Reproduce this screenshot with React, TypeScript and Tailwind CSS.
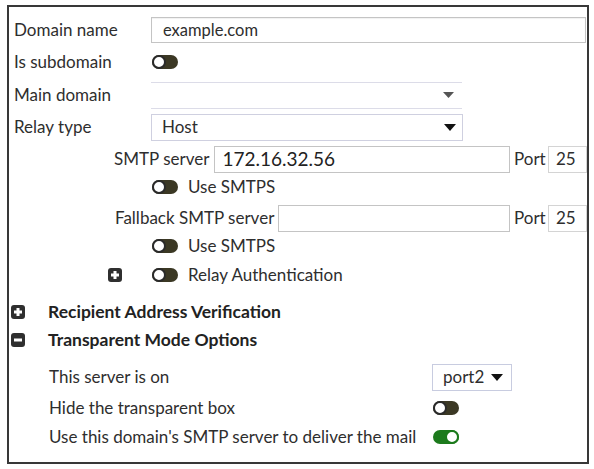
import React from "react";

const Toggle = ({ on = false }: { on?: boolean }) =>
  on ? (
    <div className="relative h-[14px] w-[26px] rounded-full bg-[#1c7a1c]">
      <div className="absolute right-0 top-0 h-[14px] w-[14px] rounded-full border-[2px] border-[#1c7a1c] bg-white" />
    </div>
  ) : (
    <div className="relative h-[14px] w-[26px] rounded-full bg-[#3b3824]">
      <div className="absolute left-0 top-0 h-[14px] w-[14px] rounded-full border-[2px] border-[#2a2a2a] bg-white" />
    </div>
  );

const Box = ({ minus = false }: { minus?: boolean }) => (
  <svg width="14" height="14" viewBox="0 0 14 14">
    <rect x="0" y="0" width="14" height="14" rx="3" fill="#2f2f2f" />
    <rect x="3" y="5.5" width="8" height="3" fill="#fff" />
    {!minus && <rect x="5.5" y="3" width="3" height="8" fill="#fff" />}
  </svg>
);

const Caret = () => (
  <svg width="12" height="7" viewBox="0 0 12 7">
    <path d="M0 0 L12 0 L6 7 Z" fill="#111" />
  </svg>
);

export default function App() {
  return (
    <div className="h-[469px] w-[594px] bg-white pl-[7px] pt-[5px] text-[17px] text-[#2e2e2e] [font-family:Lato,'Noto_Sans',sans-serif]">
      <div className="flex h-[459px] w-[582px] flex-col border-2 border-[#383838] pl-[5px] pt-[9px]">
        {/* Domain name */}
        <div className="flex h-[28px] items-center">
          <div className="w-[137px] shrink-0">Domain name</div>
          <div className="flex h-[26px] w-[435px] items-center border border-[#c4c4c4] pl-[11px] text-[16.5px] shadow-[inset_0_1px_1px_rgba(0,0,0,0.06)]">
            example.com
          </div>
        </div>
        {/* Is subdomain */}
        <div className="mt-[4px] flex h-[28px] items-center">
          <div className="w-[138px] shrink-0">Is subdomain</div>
          <Toggle />
        </div>
        {/* Main domain */}
        <div className="mt-[5px] flex h-[28px] items-center">
          <div className="w-[137px] shrink-0">Main domain</div>
          <div className="flex h-[27px] w-[311px] items-center justify-end border-y border-[#dcdce8] pr-[8px]">
            <svg width="11" height="6" viewBox="0 0 11 6">
              <path d="M0 0 L11 0 L5.5 6 Z" fill="#555" />
            </svg>
          </div>
        </div>
        {/* Relay type */}
        <div className="mt-[4px] flex h-[28px] items-center">
          <div className="w-[137px] shrink-0">Relay type</div>
          <div className="flex h-[27px] w-[312px] items-center justify-between border border-[#cfd0e0] pl-[10px] pr-[6px]">
            <span>Host</span>
            <Caret />
          </div>
        </div>
        {/* SMTP server */}
        <div className="mt-[4px] flex h-[28px] w-[573px] items-center">
          <div className="w-[100px] shrink-0" />
          <div className="shrink-0 whitespace-nowrap">SMTP server</div>
          <div className="ml-[5px] flex h-[27px] flex-1 items-center border border-[#c4c4c4] pl-[7px] text-[19px] text-[#222]">
            172.16.32.56
          </div>
          <div className="ml-[4px] w-[34px] shrink-0">Port</div>
          <div className="flex h-[27px] w-[39px] shrink-0 items-center border border-[#d4d4d4] pl-[7px]">25</div>
        </div>
        {/* Use SMTPS */}
        <div className="flex h-[28px] items-center">
          <div className="w-[138px] shrink-0" />
          <Toggle />
          <div className="ml-[10px]">Use SMTPS</div>
        </div>
        {/* Fallback */}
        <div className="mt-[3px] flex h-[28px] w-[573px] items-center">
          <div className="w-[101px] shrink-0" />
          <div className="shrink-0 whitespace-nowrap">Fallback SMTP server</div>
          <div className="ml-[4px] flex h-[27px] flex-1 items-center border border-[#c4c4c4]" />
          <div className="ml-[4px] w-[34px] shrink-0">Port</div>
          <div className="flex h-[27px] w-[39px] shrink-0 items-center border border-[#d4d4d4] pl-[7px]">25</div>
        </div>
        {/* Use SMTPS */}
        <div className="flex h-[28px] items-center">
          <div className="w-[138px] shrink-0" />
          <Toggle />
          <div className="ml-[10px]">Use SMTPS</div>
        </div>
        {/* Relay auth */}
        <div className="mt-[1px] flex h-[28px] items-center">
          <div className="w-[94px] shrink-0" />
          <Box />
          <div className="w-[30px] shrink-0" />
          <Toggle />
          <div className="ml-[10px]">Relay Authentication</div>
        </div>
        {/* Recipient */}
        <div className="mt-[9px] flex h-[28px] items-center">
          <div className="-ml-[3px]">
            <Box />
          </div>
          <div className="ml-[23px] text-[17.5px] font-bold text-[#222]">Recipient Address Verification</div>
        </div>
        {/* Transparent */}
        <div className="flex h-[28px] items-center">
          <div className="-ml-[3px]">
            <Box minus />
          </div>
          <div className="ml-[23px] text-[17.5px] font-bold text-[#222]">Transparent Mode Options</div>
        </div>
        {/* This server is on */}
        <div className="mt-[9px] flex h-[28px] items-center">
          <div className="w-[418px] shrink-0 pl-[35px]">This server is on</div>
          <div className="flex h-[27px] w-[80px] items-center border border-[#c8cce0] pl-[10px] pr-[8px]">
            <span className="flex-1">port2</span>
            <Caret />
          </div>
        </div>
        {/* Hide */}
        <div className="mt-[3px] flex h-[28px] items-center">
          <div className="w-[419px] shrink-0 pl-[35px]">Hide the transparent box</div>
          <Toggle />
        </div>
        {/* Use this domain */}
        <div className="mt-[1px] flex h-[28px] items-center">
          <div className="w-[419px] shrink-0 whitespace-nowrap pl-[35px]">Use this domain's SMTP server to deliver the mail</div>
          <Toggle on />
        </div>
      </div>
    </div>
  );
}
